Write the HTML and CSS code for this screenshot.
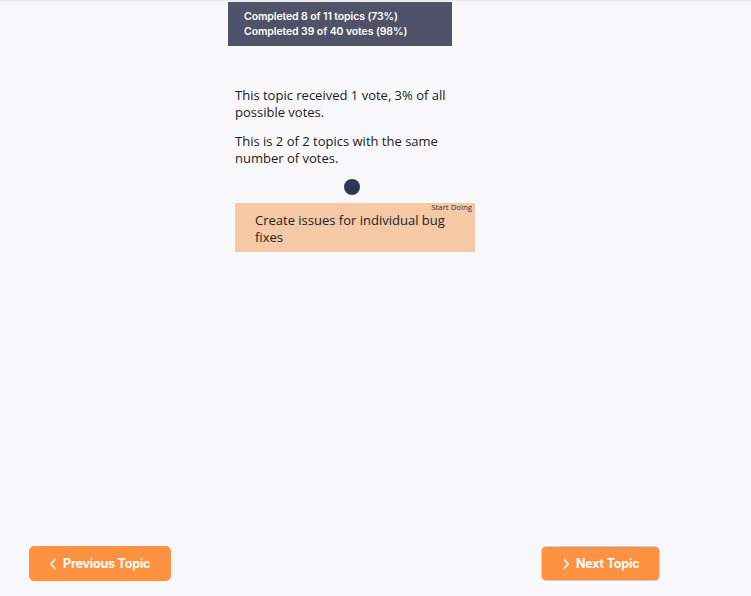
FILE: index.html
```html
<!DOCTYPE html>
<html>
<head>
<meta charset="utf-8">
<link rel="stylesheet" href="styles.css">
</head>
<body>
<div class="page">
  <div class="topline"></div>
  <div class="center">
    <div class="progress">
      <div>Completed 8 of 11 topics (73%)</div>
      <div>Completed 39 of 40 votes (98%)</div>
    </div>
    <div class="content">
      <p class="para">This topic received 1 vote, 3% of all possible votes.</p>
      <p class="para">This is 2 of 2 topics with the same number of votes.</p>
      <div class="dotrow"><span class="dot"></span></div>
      <div class="card">
        <span class="tag">Start Doing</span>
        <div class="card-text">Create issues for individual bug fixes</div>
      </div>
    </div>
  </div>
  <div class="footer">
    <button class="btn prev"><svg width="8" height="12" viewBox="0 0 8 12"><path d="M6 1.5 L1.8 6 L6 10.5" fill="none" stroke="#fff" stroke-width="1.6" stroke-linecap="round" stroke-linejoin="round"/></svg>Previous Topic</button>
    <button class="btn next"><svg width="8" height="12" viewBox="0 0 8 12"><path d="M2 1.5 L6.2 6 L2 10.5" fill="none" stroke="#fff" stroke-width="1.6" stroke-linecap="round" stroke-linejoin="round"/></svg>Next Topic</button>
  </div>
</div>
</body>
</html>
```
FILE: styles.css
```css
html, body {
  margin: 0;
  padding: 0;
  background: #f8f8fb;
}
.page {
  height: 596px;
  display: flex;
  flex-direction: column;
  box-sizing: border-box;
}
.topline {
  height: 2px;
  background: linear-gradient(#e9e9ee, #f3f3f7);
  flex: none;
}
.center {
  display: flex;
  flex-direction: column;
  padding-left: 228px;
}
.progress {
  width: 224px;
  height: 44px;
  box-sizing: border-box;
  background: #4f5268;
  color: #fff;
  font-family: Inter, "Liberation Sans", sans-serif;
  font-weight: 600;
  font-size: 10.5px;
  letter-spacing: -0.1px;
  line-height: 15px;
  padding: 7px 0 0 16px;
}
.content {
  width: 240px;
  margin-left: 7px;
  padding-top: 41px;
  font-family: "Open Sans", "Noto Sans", sans-serif;
  color: #1a1a1a;
}
.para {
  margin: 0 0 12px 0;
  font-size: 13px;
  line-height: 17px;
}
.dotrow {
  display: flex;
  justify-content: center;
  padding-right: 6px;
}
.dot {
  width: 16px;
  height: 16px;
  border-radius: 50%;
  background: #313452;
}
.card {
  position: relative;
  margin-top: 8px;
  background: #f5c9a6;
  height: 49px;
  box-sizing: border-box;
  padding: 9px 20px 0 20px;
  border-radius: 1px;
}
.tag {
  position: absolute;
  top: 0;
  right: 3px;
  font-size: 7.8px;
  line-height: 9px;
  color: #333;
}
.card-text {
  font-size: 13px;
  line-height: 17px;
  color: #222;
}
.footer {
  margin-top: auto;
  display: flex;
  justify-content: space-between;
  padding: 0 91px 15px 29px;
}
.btn {
  height: 35px;
  border: 1px solid #ff9240;
  border-radius: 5px;
  background: #ff9240;
  color: #fff;
  font-family: Inter, "Liberation Sans", sans-serif;
  font-weight: 700;
  font-size: 12.5px;
  letter-spacing: -0.2px;
  display: flex;
  align-items: center;
  gap: 6px;
  padding: 0 0 0 19px;
  cursor: pointer;
}
.prev {
  width: 142px;
}
.next {
  width: 119px;
  border-color: #c3cfe9;
  padding-left: 20px;
}
```
